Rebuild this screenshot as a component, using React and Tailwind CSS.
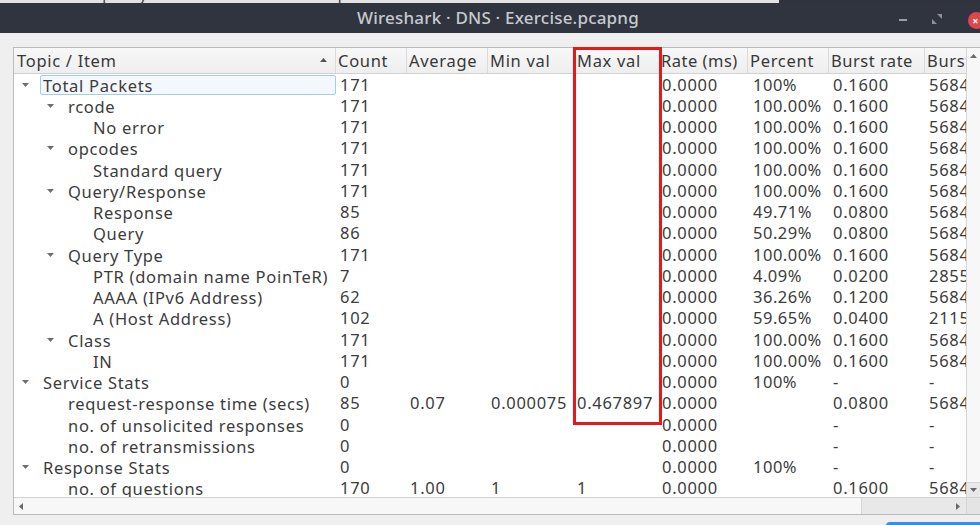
import React from 'react';

// [level, expanded, name, count, avg, min, max, rate, percent, burst, burstStart]
const ROWS = [
    [0, true, 'Total Packets', '171', '', '', '', '0.0000', '100%', '0.1600', '5684'],
    [1, true, 'rcode', '171', '', '', '', '0.0000', '100.00%', '0.1600', '5684'],
    [2, false, 'No error', '171', '', '', '', '0.0000', '100.00%', '0.1600', '5684'],
    [1, true, 'opcodes', '171', '', '', '', '0.0000', '100.00%', '0.1600', '5684'],
    [2, false, 'Standard query', '171', '', '', '', '0.0000', '100.00%', '0.1600', '5684'],
    [1, true, 'Query/Response', '171', '', '', '', '0.0000', '100.00%', '0.1600', '5684'],
    [2, false, 'Response', '85', '', '', '', '0.0000', '49.71%', '0.0800', '5684'],
    [2, false, 'Query', '86', '', '', '', '0.0000', '50.29%', '0.0800', '5684'],
    [1, true, 'Query Type', '171', '', '', '', '0.0000', '100.00%', '0.1600', '5684'],
    [2, false, 'PTR (domain name PoinTeR)', '7', '', '', '', '0.0000', '4.09%', '0.0200', '2855'],
    [2, false, 'AAAA (IPv6 Address)', '62', '', '', '', '0.0000', '36.26%', '0.1200', '5684'],
    [2, false, 'A (Host Address)', '102', '', '', '', '0.0000', '59.65%', '0.0400', '2115'],
    [1, true, 'Class', '171', '', '', '', '0.0000', '100.00%', '0.1600', '5684'],
    [2, false, 'IN', '171', '', '', '', '0.0000', '100.00%', '0.1600', '5684'],
    [0, true, 'Service Stats', '0', '', '', '', '0.0000', '100%', '-', '-'],
    [1, false, 'request-response time (secs)', '85', '0.07', '0.000075', '0.467897', '0.0000', '', '0.0800', '5684'],
    [1, false, 'no. of unsolicited responses', '0', '', '', '', '0.0000', '', '-', '-'],
    [1, false, 'no. of retransmissions', '0', '', '', '', '0.0000', '', '-', '-'],
    [0, true, 'Response Stats', '0', '', '', '', '0.0000', '100%', '-', '-'],
    [1, false, 'no. of questions', '170', '1.00', '1', '1', '0.0000', '', '0.1600', '5684'],
];

const INDENT = { 0: 'pl-0', 1: 'pl-[25px]', 2: 'pl-[50px]' };

function Tri({ dir = 'down', className = '' }) {
    const pts = {
        down: '0,0 7,0 3.5,4',
        up: '0,4 7,4 3.5,0',
        left: '4,0 4,7 0,3.5',
        right: '0,0 0,7 4,3.5',
    }[dir];
    const w = dir === 'left' || dir === 'right' ? 4 : 7;
    const h = dir === 'left' || dir === 'right' ? 7 : 4;
    return (
        <svg width={w} height={h} viewBox={`0 0 ${w} ${h}`} className={className}>
            <polygon points={pts} fill="currentColor" />
        </svg>
    );
}

export default function App() {
    return (
        <div className="w-[980px] h-[525px] overflow-hidden bg-[#efefef] relative font-['Noto_Sans',sans-serif] text-[#3c3c3c]">

            {/* Menu strip (cut off) */}
            <div className="h-[3px] overflow-hidden flex bg-[#e2e2e2]">
                <div className="w-[779px] -mt-[15px] flex gap-[24px] text-[15px] leading-[18px] text-[#3a3a3a]">
                    <span className="-ml-[12px]">Statistics</span>
                    <span>Telephony</span>
                    <span>Wireless</span>
                    <span>Tools</span>
                    <span>Help</span>
                </div>
                <div className="flex-1 bg-[#30333b]" />
            </div>

            {/* Title bar */}
            <div className="h-[30px] bg-[#30343e] flex items-center justify-center relative">
                <span className="text-[17px] font-medium text-[#c6c9d0] tracking-[0.2px] ml-[16px]">Wireshark · DNS · Exercise.pcapng</span>
                <div className="absolute left-[899px] top-[16px] w-[8px] h-[2px] bg-[#9a9da4]" />
                <svg className="absolute left-[932px] top-[11px]" width="10" height="10" viewBox="0 0 10 10">
                    <polygon points="5,0 10,0 10,5" fill="#8d9097" />
                    <polygon points="0,5 5,10 0,10" fill="#8d9097" />
                </svg>
                <div className="absolute left-[968px] top-[9px] w-[17px] h-[17px] rounded-full bg-[#e0454b] flex items-center justify-center">
                    <span className="text-white text-[11px] leading-none -ml-[2px] font-bold">×</span>
                </div>
            </div>

            {/* Table frame */}
            <div className="mt-[14px] ml-[13px] w-[968px] h-[468px] border border-[#bcbcbc] bg-white flex flex-col">
                <div className="flex flex-1 min-h-0">
                    <div className="w-[952px] flex flex-col overflow-hidden text-[16.5px] tracking-[0.7px]">
                        {/* Header */}
                        <div className="h-[26px] flex shrink-0 bg-gradient-to-b from-[#f8f8f8] to-[#eeeeee] border-b border-[#d2d2d2] leading-[25px] text-[#383838] whitespace-nowrap">
                            <div className="w-[322px] pl-[3px] border-r border-[#dadada] flex items-center justify-between pr-[8px]">
                                <span>Topic / Item</span>
                                <Tri dir="up" className="text-[#555] mb-[2px]" />
                            </div>
                            <div className="w-[71px] pl-[2px] border-r border-[#dadada]">Count</div>
                            <div className="w-[81px] pl-[2px] border-r border-[#dadada]">Average</div>
                            <div className="w-[87px] pl-[2px] border-r border-[#dadada]">Min val</div>
                            <div className="w-[85px] pl-[2px] border-r border-[#dadada]">Max val</div>
                            <div className="w-[88px] pl-[1px] border-r border-[#dadada] tracking-[0.5px]">Rate (ms)</div>
                            <div className="w-[81px] pl-[2px] border-r border-[#dadada]">Percent</div>
                            <div className="w-[96px] pl-[2px] border-r border-[#dadada] tracking-[0.5px]">Burst rate</div>
                            <div className="flex-1 pl-[2px] overflow-hidden">Burst start</div>
                        </div>

                        {/* Rows */}
                        <div className="flex-1 overflow-hidden">
                            {ROWS.map((r, i) => (
                                <div key={i} className="h-[21.25px] flex items-center whitespace-nowrap leading-[20px]">
                                    <div className={`w-[322px] flex items-center ${INDENT[r[0]]}`}>
                                        <div className="w-[26px] flex items-center pl-[8px]">
                                            {r[1] && <Tri className="text-[#6e6e6e]" />}
                                        </div>
                                        <div className={`flex-1 h-[20px] pl-[2px] border rounded-[2px] ${i === 0 ? 'border-[#a9cbea] bg-[#f3f8fd]' : 'border-transparent'}`}>
                                            {r[2]}
                                        </div>
                                    </div>
                                    <div className="w-[71px] pl-[4px]">{r[3]}</div>
                                    <div className="w-[81px] pl-[3px]">{r[4]}</div>
                                    <div className="w-[87px] pl-[3px]">{r[5]}</div>
                                    <div className="w-[85px] pl-[2px]">{r[6]}</div>
                                    <div className="w-[88px] pl-[2px]">{r[7]}</div>
                                    <div className="w-[81px] pl-[5px] tracking-[0.5px]">{r[8]}</div>
                                    <div className="w-[96px] pl-[4px]">{r[9]}</div>
                                    <div className="flex-1 pl-[4px] overflow-hidden">{r[10]}</div>
                                </div>
                            ))}
                        </div>
                    </div>

                    {/* Vertical scrollbar */}
                    <div className="flex-1 border-l border-[#d6d6d6] flex flex-col bg-[#e8e8e8]">
                        <div className="flex-1 bg-[#f7f7f7] border-b border-[#d6d6d6] flex justify-center pt-[6px]">
                            <Tri dir="up" className="text-[#6a6a6a]" />
                        </div>
                        <div className="h-[14px] flex justify-center items-center">
                            <Tri className="text-[#6a6a6a]" />
                        </div>
                    </div>
                </div>

                {/* Horizontal scrollbar */}
                <div className="h-[17px] flex border-t border-[#d2d2d2] shrink-0">
                    <div className="w-[848px] bg-[#f7f7f7] border-r border-[#d6d6d6] flex items-center pl-[5px]">
                        <Tri dir="left" className="text-[#6a6a6a]" />
                    </div>
                    <div className="w-[104px] bg-[#e8e8e8] flex items-center justify-end pr-[6px]">
                        <Tri dir="right" className="text-[#6a6a6a]" />
                    </div>
                    <div className="flex-1 bg-[#e4e4e4] border-l border-[#d6d6d6]" />
                </div>
            </div>

            {/* Red annotation box */}
            <div className="absolute left-[573px] top-[47px] w-[89px] h-[378px] border-[3px] border-[#e3191c]" />

            {/* Edge of a button below */}
            <div className="absolute left-[886px] top-[522px] w-[100px] h-[20px] rounded-[4px] bg-[#3d8ed8]" />
        </div>
    );
}
